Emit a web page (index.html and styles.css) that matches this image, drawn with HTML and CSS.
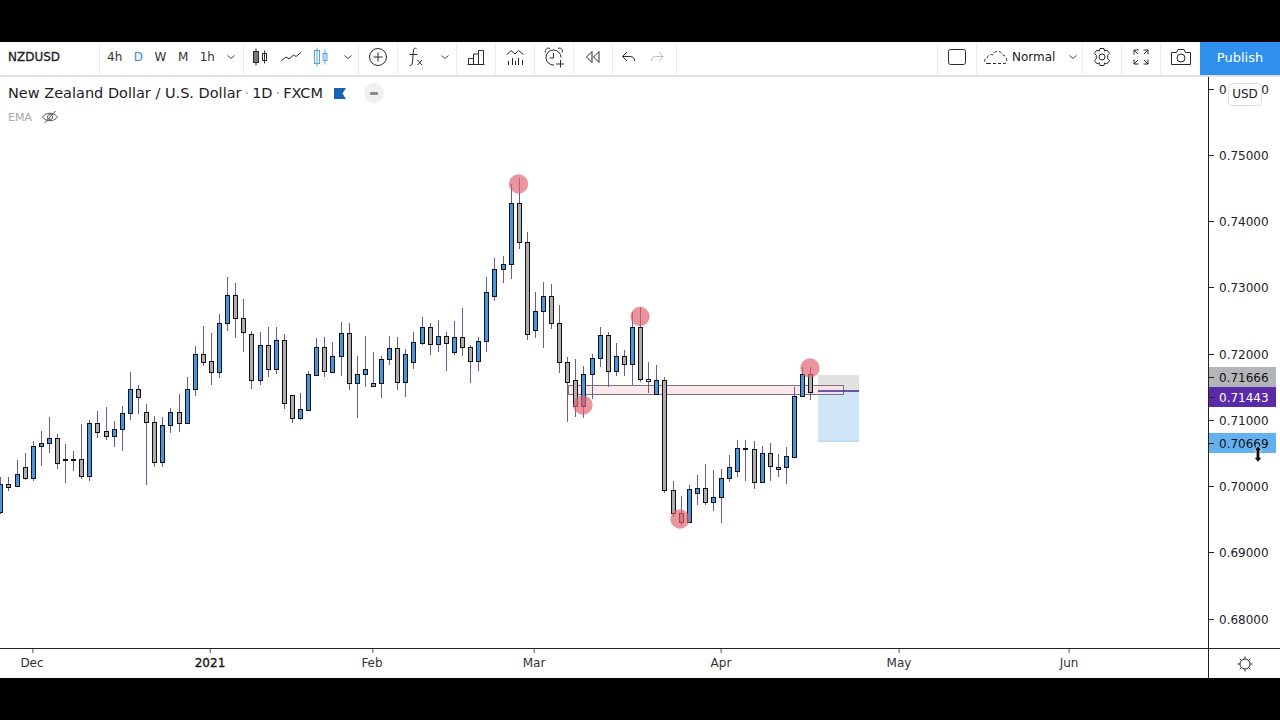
FILE: index.html
```html
<!DOCTYPE html>
<html lang="en">
<head>
    <meta charset="UTF-8">
    <title>NZDUSD</title>
    <link rel="stylesheet" href="styles.css">
</head>
<body>
    <div class="black-bar"></div>

    <!-- Top toolbar -->
    <div class="toolbar">
        <div class="tool-group symbol">NZDUSD</div>
        <div class="tool-group intervals">
            <span class="tab">4h</span>
            <span class="tab active">D</span>
            <span class="tab">W</span>
            <span class="tab">M</span>
            <span class="tab">1h</span>
            <svg class="caret" width="10" height="6" viewBox="0 0 10 6"><path d="M1.500 1.500 5 4.500l3.500-3"/></svg>
        </div>
        <div class="tool-group styles">
            <svg class="icon" width="20" height="20" viewBox="0 0 20 20"><path d="M5 1.500v17M13.500 3.500v13"/><rect class="dark" x="2.500" y="4.500" width="5" height="11"/><rect x="11.500" y="6.500" width="4" height="7"/></svg>
            <svg class="icon" width="22" height="20" viewBox="0 0 22 20"><path d="M1.500 13.500 6 10l3 2 4.500-4 2.500 1.500 5-4"/></svg>
            <svg class="icon blue" width="20" height="20" viewBox="0 0 20 20"><path d="M6 .5v19M14 2.500v15"/><rect x="3.500" y="3.500" width="5" height="13"/><rect x="12" y="6.500" width="4" height="7"/></svg>
            <svg class="caret" width="10" height="6" viewBox="0 0 10 6"><path d="M1.500 1.500 5 4.500l3.500-3"/></svg>
        </div>
        <div class="tool-group square">
            <svg class="icon" width="20" height="20" viewBox="0 0 20 20"><circle cx="10" cy="10" r="8.500"/><path d="M10 5.500v9M5.500 10h9"/></svg>
        </div>
        <div class="tool-group indicators">
            <svg class="icon" width="20" height="22" viewBox="0 0 20 22"><path d="M10.500 2.500C8 1.500 7.500 3 7.300 6L6.500 16c-.2 3-1.200 4-3 3.200M3.500 8.500h8M11.500 14l4.500 5M16 14l-4.500 5"/></svg>
            <svg class="caret" width="10" height="6" viewBox="0 0 10 6"><path d="M1.500 1.500 5 4.500l3.500-3"/></svg>
        </div>
        <div class="tool-group square">
            <svg class="icon" width="20" height="20" viewBox="0 0 20 20"><path d="M1.500 17.500h17M2.500 17.500v-6h5v6M7.500 17.500V7h5v10.500M12.500 17.500V3.500h5v14"/></svg>
        </div>
        <div class="tool-group square">
            <svg class="icon" width="20" height="20" viewBox="0 0 20 20"><path d="M1.500 8 6 3.500l4 3.500 3.500-3.500 5 4M3.500 18v-4M7.500 18v-7M10.500 18v-4M13.500 18v-7M17.500 18v-5"/></svg>
        </div>
        <div class="tool-group square">
            <svg class="icon" width="22" height="22" viewBox="0 0 22 22"><path d="M18 11.500A7.500 7.500 0 1 0 11 19M10.500 7v5H6.500M2.500 6.500C1.500 3.500 4.500 1 7 2.500M19 6.500C20.500 3.500 17.500 1 15 2.500M17.500 14v7.500M13 18h8"/></svg>
        </div>
        <div class="tool-group square">
            <svg class="icon" width="20" height="20" viewBox="0 0 20 20"><path d="M9 4.500 3.500 10 9 15.500zM16 4.500 10.500 10l5.500 5.500z"/></svg>
        </div>
        <div class="tool-group undo">
            <svg class="icon" width="18" height="16" viewBox="0 0 18 16"><path d="M7 3 2.500 7.500 7 12M3 7.500h7.500c2.500 0 4 1.500 4 4.500"/></svg>
            <svg class="icon faded" width="18" height="16" viewBox="0 0 18 16"><path d="M11 3l4.500 4.500L11 12M15 7.500H7.500c-2.500 0-4 1.500-4 4.500"/></svg>
        </div>
        <div class="toolbar-space"></div>
        <div class="tool-group square">
            <svg class="icon" width="20" height="20" viewBox="0 0 20 20"><rect x="1.500" y="2.500" width="17" height="15" rx="2"/></svg>
        </div>
        <div class="tool-group layout">
            <svg class="icon dashed" width="26" height="20" viewBox="0 0 26 20"><path d="M6 16.500H4C1 16.500.5 11 4.500 10.500 5 7.500 8 7 9.500 8 11 3.500 18 3 20 8c3.500.5 6 8.500 1 8.500z"/></svg>
            <span class="layout-name">Normal</span>
            <svg class="caret" width="10" height="6" viewBox="0 0 10 6"><path d="M1.500 1.500 5 4.500l3.500-3"/></svg>
        </div>
        <div class="tool-group square">
            <svg class="icon" width="20" height="20" viewBox="0 0 20 20"><circle cx="10" cy="10" r="3"/><path d="M8 1.500h4l.6 2.600 2.400-1 2.500 3.200-1.800 2 0 3.400 1.800 2-2.500 3.200-2.400-1-.6 2.600H8l-.6-2.600-2.400 1-2.500-3.200 1.800-2 0-3.400-1.800-2L5 3.100l2.400 1z"/></svg>
        </div>
        <div class="tool-group square">
            <svg class="icon" width="20" height="20" viewBox="0 0 20 20"><path d="M3 7.500V3h4.500M3 3l4 4M17 7.500V3h-4.500M17 3l-4 4M3 12.500V17h4.500M3 17l4-4M17 12.500V17h-4.500M17 17l-4-4"/></svg>
        </div>
        <div class="tool-group camera">
            <svg class="icon" width="22" height="20" viewBox="0 0 22 20"><path d="M1.500 5.500h5l1.500-3h6l1.500 3h5v12h-19z"/><circle cx="11" cy="11" r="4"/></svg>
        </div>
        <div class="publish">Publish</div>
    </div>

    <div class="workspace">
        <div class="chart-column">
            <div class="chart" id="chart">
                <div class="legend">
                    <div class="legend-title">
                        <span>New Zealand Dollar / U.S. Dollar</span>
                        <span class="dot">·</span>
                        <span>1D</span>
                        <span class="dot">·</span>
                        <span>FXCM</span>
                        <svg class="flag" width="12" height="11" viewBox="0 0 12 11"><path d="M0 0h12L8.500 5.500 12 11H0z"/></svg>
                        <span class="status"><i></i></span>
                    </div>
                    <div class="legend-study">
                        <span>EMA</span>
                        <svg class="icon eye" width="18" height="16" viewBox="0 0 18 16"><path d="M1.500 8C5 3 13 3 16.500 8 13 13 5 13 1.500 8zM3.500 14 14.500 2"/><circle cx="9" cy="8" r="2.500"/></svg>
                    </div>
                </div>
            </div>
            <div class="time-axis" id="timeAxis"></div>
        </div>
        <div class="price-column">
            <div class="price-axis" id="priceAxis">
                <!-- top price label, mostly hidden behind the currency button -->
                <div class="price top-price"><span>0</span><span>0</span></div>
                <span class="usd">USD</span>
            </div>
            <div class="axis-corner">
                <svg class="icon" width="16" height="16" viewBox="0 0 16 16"><circle cx="8" cy="8" r="5"/><path d="M8 .5v2.500M8 13v2.500M.5 8H3M13 8h2.500M2.700 2.700l1.800 1.800M11.500 11.500l1.800 1.800M13.300 2.700l-1.800 1.800M4.500 11.500l-1.800 1.800"/></svg>
            </div>
        </div>
    </div>

    <div class="black-bar"></div>
    <script src="chart.js"></script>
</body>
</html>
```

FILE: styles.css
```css
* {
    box-sizing: border-box;
}
body {
    margin: 0;
    width: 1280px;
    height: 720px;
    overflow: hidden;
    display: flex;
    flex-direction: column;
    background: white;
    color: #1f2024;
    font-family: "DejaVu Sans", sans-serif;
    font-size: 12px;
}
.black-bar {
    height: 42px;
    background: black;
    flex: none;
}
.toolbar {
    height: 35px;
    flex: none;
    display: flex;
    border-bottom: 2px solid #e3e3e3;
}
.tool-group {
    display: flex;
    align-items: center;
    justify-content: center;
    border-right: 1px solid #ececec;
    height: 33px;
    padding-bottom: 3px;
    flex: none;
}
.symbol {
    width: 100px;
    justify-content: flex-start;
    padding-left: 8px;
    -webkit-text-stroke: 0.3px #1f2024;
}
.intervals {
    width: 144px;
    justify-content: flex-start;
    padding-left: 7px;
}
.tab {
    margin-right: 11.500px;
    color: #333;
}
.tab.active {
    color: #3a8bd8;
}
.caret {
    fill: none;
    stroke: #444;
    stroke-width: 1;
    flex: none;
}
.icon {
    fill: none;
    stroke: #2a2a2a;
    stroke-width: 1;
    flex: none;
}
.icon .dark {
    fill: #777;
}
.icon.blue {
    stroke: #5aa0dc;
}
.icon.faded {
    stroke: #bdbdbd;
}
.icon.dashed {
    stroke-dasharray: 3 2;
}
.styles {
    width: 115px;
    justify-content: flex-start;
    padding-left: 7px;
    gap: 9px;
}
.styles .caret {
    margin-left: 3px;
}
.square {
    width: 39px;
}
.indicators {
    width: 59px;
    justify-content: flex-start;
    padding-left: 8px;
    gap: 14px;
}
.undo {
    width: 64px;
    justify-content: flex-start;
    padding-left: 7px;
    gap: 10px;
}
.toolbar-space {
    flex: 1;
    border-right: 1px solid #ececec;
    height: 33px;
}
.layout {
    width: 106px;
    justify-content: flex-start;
    padding-left: 6px;
    gap: 3px;
}
.layout-name {
    width: 53px;
}
.camera {
    width: 39px;
    border-right: none;
}
.publish {
    width: 80px;
    height: 33px;
    padding-bottom: 3px;
    background: #2f8fec;
    color: white;
    font-size: 13px;
    display: flex;
    align-items: center;
    justify-content: center;
}
.workspace {
    flex: 1;
    display: flex;
    min-height: 0;
}
.chart-column {
    flex: 1;
    display: flex;
    flex-direction: column;
}
.chart {
    flex: 1;
    position: relative;
    overflow: hidden;
    border-bottom: 1px solid #222;
}
.chart svg.plot {
    position: absolute;
    left: 0;
    top: 0;
}
.legend {
    position: absolute;
    left: 8px;
    top: 5px;
    z-index: 2;
}
.legend-title {
    display: flex;
    align-items: center;
    gap: 3px;
    height: 22px;
    font-size: 14.500px;
}
.dot {
    color: #999;
}
.flag {
    fill: #1b62b5;
    margin-left: 8px;
}
.status {
    width: 20px;
    height: 20px;
    border-radius: 50%;
    background: #f0f0f0;
    margin-left: 15px;
    display: flex;
    align-items: center;
    justify-content: center;
}
.status i {
    width: 8px;
    height: 3px;
    background: #8a8a8a;
    border-radius: 1px;
}
.legend-study {
    display: flex;
    align-items: center;
    gap: 9px;
    height: 26px;
    font-size: 11px;
    color: #a8a8a8;
}
.eye {
    stroke: #555;
}
.time-axis {
    height: 29px;
    flex: none;
    position: relative;
}
.time-label {
    position: absolute;
    top: 7px;
    transform: translateX(-50%);
    color: #333;
}
.time-label::before {
    content: "";
    position: absolute;
    left: 50%;
    top: -7px;
    width: 1px;
    height: 4px;
    background: #555;
}
.time-label.year {
    color: #111;
    -webkit-text-stroke: 0.3px #111;
}
.price-column {
    width: 72px;
    flex: none;
    display: flex;
    flex-direction: column;
    border-left: 1px solid #222;
}
.price-axis {
    flex: 1;
    position: relative;
    border-bottom: 1px solid #222;
}
.axis-corner {
    height: 29px;
    flex: none;
    display: flex;
    align-items: center;
    justify-content: center;
}
.price {
    position: absolute;
    left: 0;
    width: 67px;
    height: 20px;
    line-height: 22px;
    padding-left: 10px;
}
.price::before {
    content: "";
    position: absolute;
    left: 0;
    top: 10px;
    width: 5px;
    height: 1px;
    background: #222;
}
.top-price {
    top: 2px;
    width: 60px;
    padding-left: 10px;
    display: flex;
    justify-content: space-between;
}
.usd {
    position: absolute;
    left: 19px;
    top: 6px;
    width: 34px;
    height: 23px;
    border: 1px solid #ddd;
    border-radius: 4px;
    background: white;
    text-align: center;
    line-height: 21px;
    z-index: 2;
}
.cursor {
    position: absolute;
    left: 44px;
    top: 368px;
    z-index: 3;
}
```

FILE: chart.js
```js
// plot area starts 77px below the top of the window
const TOP = 77;
const STEP = 8.1;

// [high, body top, body bottom, low, colour] in window pixels, one candle a day
const candles = [
    [477,484,512,514,"b"],[477,484,487,491,"g"],[460,474,486,486,"b"],[453,467,478,480,"g"],
    [441,446,478,481,"b"],[431,443,446,466,"b"],[417,438,443,453,"b"],[434,438,463,469,"g"],
    [444,459,460,483,"g"],[451,459,460,471,"g"],[424,459,476,479,"g"],[420,423,476,481,"b"],
    [411,423,432,438,"g"],[407,431,436,440,"g"],[421,429,436,447,"b"],[406,413,429,451,"b"],
    [372,389,413,420,"b"],[385,389,397,414,"g"],[404,412,422,485,"g"],[416,422,462,467,"g"],
    [417,425,462,467,"b"],[408,412,425,433,"b"],[394,412,423,432,"g"],[377,389,423,423,"b"],
    [346,354,389,396,"b"],[326,354,362,366,"g"],[333,361,372,385,"g"],[314,323,372,378,"b"],
    [277,295,323,331,"b"],[283,295,318,338,"g"],[299,318,332,352,"g"],[331,334,380,389,"g"],
    [332,345,380,385,"b"],[327,345,369,377,"g"],[327,340,369,374,"b"],[334,340,403,409,"g"],
    [395,395,418,423,"g"],[393,409,418,420,"b"],[371,374,410,411,"b"],[338,347,375,376,"b"],
    [337,347,371,377,"g"],[342,356,372,373,"b"],[322,333,356,376,"b"],[323,333,383,390,"g"],
    [356,374,383,418,"b"],[336,369,374,387,"b"],[352,383,386,387,"g"],[356,359,383,398,"b"],
    [336,348,359,365,"b"],[337,348,382,390,"g"],[349,354,382,397,"b"],[332,342,362,369,"b"],
    [317,327,343,345,"b"],[323,327,344,355,"g"],[320,336,344,352,"b"],[332,336,343,371,"g"],
    [321,337,352,355,"b"],[308,337,347,356,"g"],[345,347,361,383,"g"],[337,341,361,371,"b"],
    [277,292,341,352,"b"],[258,269,296,301,"b"],[256,264,269,283,"b"],[184,203,264,279,"b"],
    [178,203,242,249,"g"],[232,242,334,340,"g"],[292,311,330,338,"b"],[282,296,311,348,"b"],
    [284,296,323,329,"g"],[305,323,362,373,"g"],[357,362,382,422,"g"],[359,380,406,417,"g"],
    [366,374,406,418,"b"],[354,358,374,399,"b"],[327,335,358,367,"b"],[332,335,371,387,"g"],
    [343,356,371,376,"b"],[350,356,364,376,"g"],[312,327,364,385,"b"],[307,327,379,382,"g"],
    [362,379,381,393,"w"],[365,380,394,394,"b"],[377,380,490,493,"g"],[481,490,513,517,"g"],
    [496,513,522,526,"g"],[485,489,522,523,"b"],[475,488,493,505,"b"],[464,488,502,505,"g"],
    [470,497,502,511,"b"],[469,478,497,523,"b"],[455,467,478,482,"b"],[440,448,471,477,"b"],
    [440,448,449,481,"g"],[441,449,482,489,"g"],[446,453,482,483,"b"],[443,453,466,481,"g"],
    [454,467,469,477,"g"],[447,456,467,484,"b"],[387,396,457,457,"b"],[367,374,396,397,"b"],
    [367,374,392,400,"g"]
];
const fills = { b: "#4a96de", g: "#adadaf", w: "#ffffff" };

const prices = [
    ["0.75000", 155], ["0.74000", 221], ["0.73000", 287], ["0.72000", 354],
    ["0.71000", 420], ["0.70000", 486], ["0.69000", 552], ["0.68000", 619]
];
const tags = [
    ["0.71666", 377, "#b4b5b8", "#111"],
    ["0.71443", 397, "#5b2aa8", "#fff"],
    ["0.70669", 443, "#63b2ef", "#111"]
];
const months = [["Dec", 32], ["2021", 210, true], ["Feb", 372], ["Mar", 534], ["Apr", 721], ["May", 899], ["Jun", 1069]];

function y(v) { return v - TOP; }

let svg = '<svg class="plot" width="1208" height="571" viewBox="0 0 1208 571">';

// zones behind the candles
svg += `<rect x="818" y="${y(375)}" width="41" height="16" fill="#e2e2e3"/>`;
svg += `<rect x="818" y="${y(391)}" width="41" height="51" fill="#cfe6f9"/>`;
svg += `<rect x="818" y="${y(440.5)}" width="41" height="1.500" fill="#b5dbf7"/>`;
svg += `<rect x="568.500" y="${y(385.5)}" width="275" height="9" fill="#f9e2e6" fill-opacity="0.8" stroke="#7d7279"/>`;

candles.forEach((c, i) => {
    const x = Math.round(0.3 + i * STEP) + 0.5;
    svg += `<path d="M${x} ${y(c[0])}V${y(c[3])}" stroke="#6d5a91" stroke-width="1"/>`;
    svg += `<rect x="${x - 2}" y="${y(c[1]) + 0.5}" width="4" height="${Math.max(c[2] - c[1], 1)}" fill="${fills[c[4]]}" stroke="#111" stroke-width="1"/>`;
});

svg += `<path d="M818 ${y(391)}H859" stroke="#3b2a8e" stroke-width="1.500"/>`;

[[518.5, 184], [640, 316.5], [583, 405], [680, 519], [810, 368]].forEach(p => {
    svg += `<circle cx="${p[0]}" cy="${y(p[1])}" r="9.700" fill="#e0626f" fill-opacity="0.68"/>`;
});
svg += "</svg>";
document.getElementById("chart").insertAdjacentHTML("afterbegin", svg);

const axis = document.getElementById("priceAxis");
let html = "";
prices.forEach(p => {
    html += `<div class="price" style="top:${y(p[1]) - 10}px">${p[0]}</div>`;
});
tags.forEach(t => {
    html += `<div class="price" style="top:${y(t[1]) - 10}px;background:${t[2]};color:${t[3]}">${t[0]}</div>`;
});
// mouse cursor over the axis
html += '<svg class="cursor" width="10" height="18" viewBox="0 0 10 18"><path d="M5 .8 8.800 5.500H6.800v7h2L5 17.200 1.200 12.500h2v-7h-2z" fill="#111" stroke="#fff" stroke-width="0.700"/></svg>';
axis.insertAdjacentHTML("beforeend", html);

const time = document.getElementById("timeAxis");
months.forEach(m => {
    time.insertAdjacentHTML("beforeend", `<span class="time-label${m[2] ? " year" : ""}" style="left:${m[1]}px">${m[0]}</span>`);
});
```
